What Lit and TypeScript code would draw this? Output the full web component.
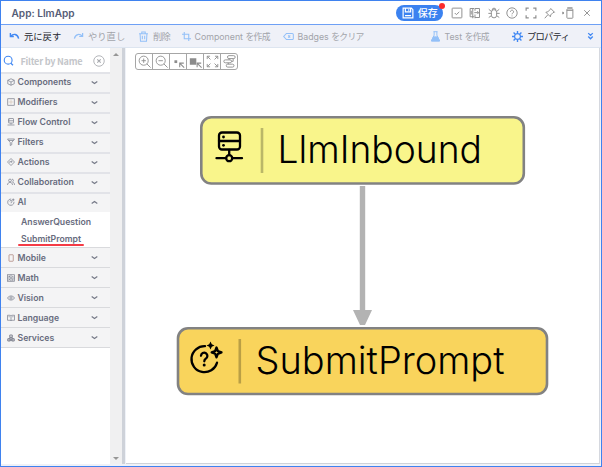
import { LitElement, html, css, svg, SVGTemplateResult } from "lit";
import { customElement } from "lit/decorators.js";
import { classMap } from "lit/directives/class-map.js";

const glyphs: Record<string, SVGTemplateResult> = {
  undo: svg`<path d="M2 3v5h5M2.5 7.5C6 3.5 12.500 4 14 11" stroke-width="2"/>`,
  redo: svg`<path d="M14 3v5H9M13.500 7.500C10 3.500 3.500 4 2 11" stroke-width="1.800"/>`,
  trash: svg`<path d="M1.500 4h13M5.500 4V1.500h5V4M3 4l.6 11h8.800L13 4M6.300 7v5M9.700 7v5" stroke-width="1.500"/>`,
  crop: svg`<path d="M4 0v12h12M0 4h12v12" stroke-width="1.900"/>`,
  badge: svg`<path d="M5 3.500h8.500a1.500 1.500 0 0 1 1.500 1.500v6a1.500 1.500 0 0 1-1.500 1.500H5L1 8zM7.500 6.500l3 3m0-3l-3 3" stroke-width="1.500"/>`,
  flask: svg`<path d="M5 1h6M6 1v5L2 14.500h12L10 6V1" stroke-width="1.400"/><path d="M5 8.500h6l3 6H2z" fill="currentColor"/>`,
  gear: svg`<circle cx="8" cy="8" r="4.300" stroke-width="1.800"/><path d="M8 0v3.500M8 12.500v3.500M0 8h3.500M12.500 8h3.500M2.300 2.300l2.500 2.500M11.200 11.200l2.500 2.500M13.700 2.300l-2.500 2.500M4.800 11.200l-2.500 2.500" stroke-width="2"/>`,
  more: svg`<path d="M4 2l4 4 4-4M4 8l4 4 4-4" stroke-width="2.400"/>`,
  save: svg`<path d="M1.500 1.500h11l2 2v11h-13zM4.500 1.500v5h7v-5M4 11.500h8M9 3v2" stroke-width="1.600"/>`,
  check: svg`<rect x="1.500" y="1.500" width="13" height="13" rx=".8"/><path d="M5 8l2.200 2.200L11 6.500"/>`,
  diff: svg`<path d="M7 2H1.500v11H7M5 2v13M8 2h6v12H8M8 2v3M8 10v5M7 7.500h6m-2-2l2 2-2 2M3 5v5"/>`,
  bug: svg`<path d="M4.500 7a3.500 3.500 0 0 1 7 0v4a3.500 3.500 0 0 1-7 0zM5.500 4.500a2.500 3 0 0 1 5 0M0.500 8.500h4M11.500 8.500h4M1 3l3.500 3M15 3l-3.500 3M1 14l3.500-2.500M15 14l-3.500-2.500"/>`,
  help: svg`<circle cx="8" cy="8" r="6.900"/><path d="M5.900 6.300a2.100 2.100 0 1 1 3.200 1.800C8.300 8.500 8 8.900 8 9.800M8 11.300v1.200"/>`,
  full: svg`<path d="M1.500 5V1.500H5M11 1.500h3.500V5M14.500 11v3.500H11M5 14.500H1.500V11" stroke-width="1.600"/>`,
  pin: svg`<path d="M9 2l5 5-2 .5-3 3-.5 2.500-6-6L5 6.500l3-3zM5 10.500L1 15"/>`,
  dock: svg`<rect x="6.500" y="2.500" width="8" height="12.500" rx="1"/><path d="M6.500 4.500h8M7 1h7M1 6.500l1.500 1.500L1 9.500z"/>`,
  close: svg`<path d="M3.500 3.500l9 9m0-9l-9 9" stroke-width="1.500"/>`,
  search: svg`<circle cx="7.500" cy="7.500" r="5.700" stroke-width="1.600"/><path d="M11.500 12l3 3" stroke-width="1.800"/>`,
  clear: svg`<circle cx="8" cy="8" r="7" stroke-width="1.100"/><path d="M5.700 5.700l4.600 4.600m0-4.600l-4.600 4.600" stroke-width="1.400"/>`,
  down: svg`<path d="M3 6.200L8 9.800l5-3.600" stroke-width="2.200"/>`,
  up: svg`<path d="M3 9.800L8 6.200l5 3.600" stroke-width="2.200"/>`,
  cube: svg`<path d="M8 1.500L14.500 4.500v7L8 14.500l-6.500-3v-7zM1.500 4.500L8 8l6.500-3.500M8 8v6.500"/>`,
  grid: svg`<rect x="1.500" y="1.500" width="13" height="13"/><path d="M8 3v10M3 8h10" stroke="#c3a98e" stroke-width=".8"/>`,
  server: svg`<rect x="3" y="1" width="10" height="9" rx="1"/><path d="M3 5.500h10M8 10v3M1 14h14M5 3.300h1M5 7.700h1"/>`,
  funnel: svg`<path d="M1 2h14l-5.500 7v4.500l-3 1.500V9zM3 5h10"/>`,
  action: svg`<path d="M8 1l7 7-7 7-7-7z"/><path d="M5.500 9.500V7.300H10M8.500 5.500l2 1.800-2 1.800"/>`,
  people: svg`<circle cx="6" cy="5" r="2.800"/><path d="M1 14c0-7 10-7 10 0M10 2.300c3.500-.5 3.500 5 1 5.700 2.500.7 4 3 4 6"/>`,
  ai: svg`<path d="M13.900 7.500A6.300 6.300 0 1 1 8.500 2.200M5.800 7a2.100 2.100 0 1 1 2.300 2v1M8 11.500v1M12.500 1v5M10 3.500h5"/>`,
  phone: svg`<rect x="4" y="1.500" width="8.500" height="13" rx="1" stroke="#a77c72"/>`,
  math: svg`<rect x="1" y="1.500" width="14" height="13"/><path d="M8 1.500v13M1 8h14M3 4.800h3M4.500 3.300v3M10 4.800h3M3 10l3 3m0-3l-3 3M10 10.500h3M10 12.500h3"/>`,
  eye: svg`<path d="M1 8c3-5.500 11-5.500 14 0-3 5.500-11 5.500-14 0z"/><circle cx="8" cy="8" r="2.300"/>`,
  book: svg`<path d="M1 2.500h5.500L8 4l1.500-1.500H15v10H9.500L8 14l-1.500-1.500H1zM8 4v10M10.500 5.500h2.500M3 5.500h2.500"/>`,
  boxes: svg`<path d="M5.500 2h5v4.500h-5zM1.500 9.500h5V14h-5zM9.500 9.500h5V14h-5zM4 9.500V8h8v1.500M8 6.500V8M3 12h10" stroke-width="1.800"/>`,
  zoomIn: svg`<circle cx="7" cy="7" r="5.600"/><path d="M11 11l4.500 4.500M4.300 7h5.400M7 4.300v5.400"/>`,
  zoomOut: svg`<circle cx="7" cy="7" r="5.600"/><path d="M11 11l4.500 4.500M4.300 7h5.400"/>`,
  smallNode: svg`<path d="M3 6.500h3.400v3.400H3z" fill="currentColor" stroke="none"/><path d="M15 15.500L10 10.500M9.500 15v-5h5" stroke-width="1.300"/>`,
  bigNode: svg`<path d="M1 4h8v8H1z" fill="currentColor" stroke="none"/><path d="M15.500 15.500L10.500 10.500M10 15v-5h5" stroke-width="1.300"/>`,
  expand: svg`<path d="M1.500 1.500l4 4M1.500 5v-3.500h3.500M14.500 1.500l-4 4M11 1.500h3.500v3.500M1.500 14.500l4-4M1.500 11v3.500h3.500M14.500 14.500l-4-4M11 14.500h3.500v-3.500"/>`,
  layout: svg`<rect x="5.500" y=".8" width="9.500" height="3.600" rx="1.800"/><rect x="1" y="6" width="9.500" height="3.600" rx="1.800"/><rect x="4" y="11.300" width="9.500" height="3.600" rx="1.800"/><path d="M7.500 4.400V6M6.500 9.600v1.700M12.500 4.400v3.400h-2" />`,
};

const icon = (name: string, size = 11) =>
  html`<svg class="icon" width=${size} height=${size} viewBox="0 0 16 16">${glyphs[name]}</svg>`;

@customElement("title-bar")
export class TitleBar extends LitElement {
  static styles = css`
    :host { display: flex; align-items: center; height: 23px; background: #fff; border-bottom: 1px solid #6ea0f5; padding: 0 5px 0 10.5px; }
    .icon { fill: none; stroke: currentColor; stroke-width: 1.3; display: block; }
    .title { flex: 1; font: 600 10.1px Inter, sans-serif; color: #555c75; }
    .save { position: relative; display: flex; align-items: center; gap: 3.5px; box-sizing: border-box; width: 47px; height: 16px; padding-left: 6px; margin-right: 4px; border-radius: 8px; background: #3b82f0; color: #fff; font: 500 10px "Noto Sans CJK JP", sans-serif; }
    .save::after { content: ""; position: absolute; right: -2px; top: -2px; width: 6px; height: 6px; border-radius: 50%; background: #fb2c2c; }
    .actions { display: flex; color: #8f8f8f; }
    .action { display: grid; place-items: center; width: 18.6px; }
  `;
  render() {
    return html`
      <span class="title">App: LlmApp</span>
      <span class="save">${icon("save", 12)}<span>保存</span></span>
      <div class="actions">
        ${["check", "diff", "bug", "help", "full", "pin", "dock", "close"].map(
          (n) => html`<span class="action">${icon(n, n === "close" ? 10 : 12)}</span>`
        )}
      </div>`;
  }
}

@customElement("tool-bar")
export class ToolBar extends LitElement {
  static styles = css`
    :host { display: grid; grid-template-columns: 64px 65px 44px 101px 147px 82px 74px 12px; align-items: center; height: 22px; padding-left: 8px; background: #eff1f8; border-bottom: 1px solid #dde5f0; font: 9.3px Inter, "Noto Sans CJK JP", sans-serif; color: #a2a4aa; }
    .icon { fill: none; stroke: currentColor; stroke-width: 1.3; display: block; flex: none; color: #93c0f8; }
    .item { display: flex; align-items: center; gap: 4px; white-space: nowrap; }
    .mixed { font-size: 8.8px; gap: 3.5px; }
    .mixed .kana { letter-spacing: -0.7px; }
    .tight { letter-spacing: -0.8px; }
    .on { color: #26282e; }
    .on .icon { color: #4188f3; }
  `;
  render() {
    const items: [string, string, string, boolean][] = [
      ["undo", "", "元に戻す", true],
      ["redo", "", "やり直し", false],
      ["trash", "", "削除", false],
      ["crop", "Component ", "を作成", false],
      ["badge", "Badges ", "をクリア", false],
      ["flask", "Test ", "を作成", false],
      ["gear", "", "プロパティ", true],
      ["more", "", "", true],
    ];
    return items.map(
      ([g, latin, kana, on]) => html`<span class=${classMap({ item: true, on, mixed: latin !== "", tight: g === "gear" || g === "trash" })}>${icon(g, g === "crop" || g === "more" ? 9 : 11)}<span>${latin}<span class="kana">${kana}</span></span></span>`
    );
  }
}

@customElement("component-palette")
export class ComponentPalette extends LitElement {
  static styles = css`
    :host { display: block; width: 109px; background: #fff; font: 600 8.7px Inter, sans-serif; color: #686c7e; }
    .icon { fill: none; stroke: currentColor; stroke-width: 1.4; display: block; flex: none; }
    .filter { display: flex; align-items: center; height: 24px; padding: 1px 5px 0 2px; box-sizing: border-box; color: #a4a6ab; }
    .filter .find { color: #4188f3; }
    .filter .hint { flex: 1; padding-left: 6.5px; white-space: nowrap; font: 700 9.1px/12px "Noto Sans CJK JP", sans-serif; letter-spacing: -0.25px; color: #c4c6ca; }
    .group { display: flex; align-items: center; box-sizing: border-box; height: 20px; padding: 0 11.5px 2px 6px; border-top: 2px solid #e2e3e8; background: #f4f4f5; }
    .group.late { border-top-width: 1px; border-top-color: #d9dadd; padding-bottom: 0; }
    .group .icon { color: #777b89; }
    .name { flex: 1; padding-left: 2.5px; }
    .children { padding: 1px 0 0; height: 35px; box-sizing: border-box; }
    .child { display: flex; align-items: center; height: 17px; padding-left: 20px; }
    .mark { display: flex; align-items: center; height: 17px; box-sizing: border-box; position: relative; }
    .mark.selected::after { content: ""; position: absolute; left: -3px; right: -3px; bottom: 1px; height: 2px; border-radius: 1px; background: #f43b46; }
    .end { border-top: 1px solid #d9dadd; }
  `;
  render() {
    const group = (g: string, name: string, late = false, open = false) => html`
      <div class=${classMap({ group: true, late })}>${icon(g, 8)}<span class="name">${name}</span>${icon(open ? "up" : "down", 9)}</div>`;
    return html`
      <div class="filter"><span class="find">${icon("search", 11)}</span><span class="hint">Filter by Name</span>${icon("clear", 12)}</div>
      ${group("cube", "Components")}${group("grid", "Modifiers")}${group("server", "Flow Control")}
      ${group("funnel", "Filters")}${group("action", "Actions")}${group("people", "Collaboration")}
      ${group("ai", "AI", false, true)}
      <div class="children">
        <div class="child"><span class="mark">AnswerQuestion</span></div>
        <div class="child"><span class="mark selected">SubmitPrompt</span></div>
      </div>
      ${group("phone", "Mobile", true)}${group("math", "Math", true)}${group("eye", "Vision", true)}
      ${group("book", "Language", true)}${group("boxes", "Services", true)}
      <div class="end"></div>`;
  }
}

@customElement("flow-canvas")
export class FlowCanvas extends LitElement {
  static styles = css`
    :host { display: block; position: relative; background: #fff; overflow: hidden; border-right: 1px solid #d5d8df; border-bottom: 1px solid #cfd3d9; }
    .tools { position: absolute; left: 9px; top: 5px; display: flex; box-sizing: border-box; width: 103px; height: 17px; border: 1px solid #a6a6a6; border-radius: 3px; color: #8c8c8c; }
    .tool { flex: 1; display: grid; place-items: center; border-left: 1px solid #a6a6a6; }
    .tool:first-child { border-left: 0; }
    .icon { fill: none; stroke: currentColor; stroke-width: 1.1; display: block; }
    .graph { display: block; }
    .box { stroke: #828282; stroke-width: 2.6; }
    .inbound { fill: #f9f58b; }
    .submit { fill: #f9d45c; }
    .rule { stroke: #000; stroke-opacity: .25; stroke-width: 2.6; }
    .link { stroke: #b3b3b3; stroke-width: 5.4; }
    .head { fill: #b3b3b3; }
    .label { font: 300 37.5px Inter, sans-serif; font-optical-sizing: none; font-variation-settings: "opsz" 14; fill: #000; }
    .pic { fill: none; stroke: #000; stroke-width: 2.3; stroke-linecap: round; stroke-linejoin: round; }
    .pic .solid { fill: #000; stroke: none; }
  `;
  render() {
    return html`
      <svg class="graph" width="474" height="415" viewBox="126 48 474 415">
        <path class="link" d="M362.500 186V312" />
        <path class="head" d="M353 310h19l-7 15h-5z" />
        <rect class="box inbound" x="201.300" y="117.300" width="322.500" height="66.200" rx="10" />
        <path class="rule" d="M262 128v45" />
        <g class="pic">
          <rect x="219" y="132.500" width="21" height="17" rx="3" />
          <path d="M219 141h21M229.200 150v5M216.500 158.200h9.500M232.500 158.200h9.500" />
          <circle cx="229.200" cy="158.200" r="3" />
          <circle class="solid" cx="223.500" cy="137" r="1.400" /><circle class="solid" cx="223.500" cy="145.300" r="1.400" />
        </g>
        <text class="label" x="277.500" y="163.300" textLength="204.500" lengthAdjust="spacingAndGlyphs">LlmInbound</text>
        <rect class="box submit" x="178" y="328.300" width="369" height="65.700" rx="10" />
        <path class="rule" d="M239.800 339v44.500" />
        <g class="pic">
          <path d="M205 346.200a13 13 0 1 0 12 16.500" />
          <path d="M201 355.700a3.200 3.200 0 1 1 4.700 3c-1.200.700-1.400 1.300-1.400 2.600" />
          <circle class="solid" cx="204.200" cy="365" r="1.500" />
          <path class="solid" d="M210.500 341.500l1.300 2.700 2.700 1.300-2.700 1.300-1.300 2.700-1.300-2.700-2.700-1.300 2.700-1.300z" />
          <path d="M216.500 347.500l1.300 3.500 3.700 1.400-3.700 1.400-1.300 3.500-1.300-3.500-3.500-1.400 3.500-1.400z" />
        </g>
        <text class="label" x="255.500" y="374" textLength="249" lengthAdjust="spacingAndGlyphs">SubmitPrompt</text>
      </svg>
      <div class="tools">
        ${["zoomIn", "zoomOut", "smallNode", "bigNode", "expand", "layout"].map((n) => html`<span class="tool">${icon(n, 13)}</span>`)}
      </div>`;
  }
}

@customElement("app-root")
export class AppRoot extends LitElement {
  static styles = css`
    :host { display: flex; flex-direction: column; box-sizing: border-box; width: 602px; height: 467px; border: 1px solid #3f82ef; background: #eff2f8; overflow: hidden; }
    .body { flex: 1; display: grid; grid-template-columns: 109px 12px 3px 1fr; min-height: 0; padding: 0 1px 2px 0; }
    .scroll { display: flex; flex-direction: column; justify-content: space-between; align-items: center; padding: 5px 0 4px; background: #f0f0f1; }
    .arrow { border: 3px solid transparent; border-top: 0; border-bottom: 3px solid #969696; }
    .arrow.down { transform: rotate(180deg); }
    .split { background: #ced2d9; }
    flow-canvas { margin-left: 1px; }
  `;
  render() {
    return html`
      <title-bar></title-bar>
      <tool-bar></tool-bar>
      <div class="body">
        <component-palette></component-palette>
        <div class="scroll"><span class="arrow"></span><span class="arrow down"></span></div>
        <div class="split"></div>
        <flow-canvas></flow-canvas>
      </div>`;
  }
}
